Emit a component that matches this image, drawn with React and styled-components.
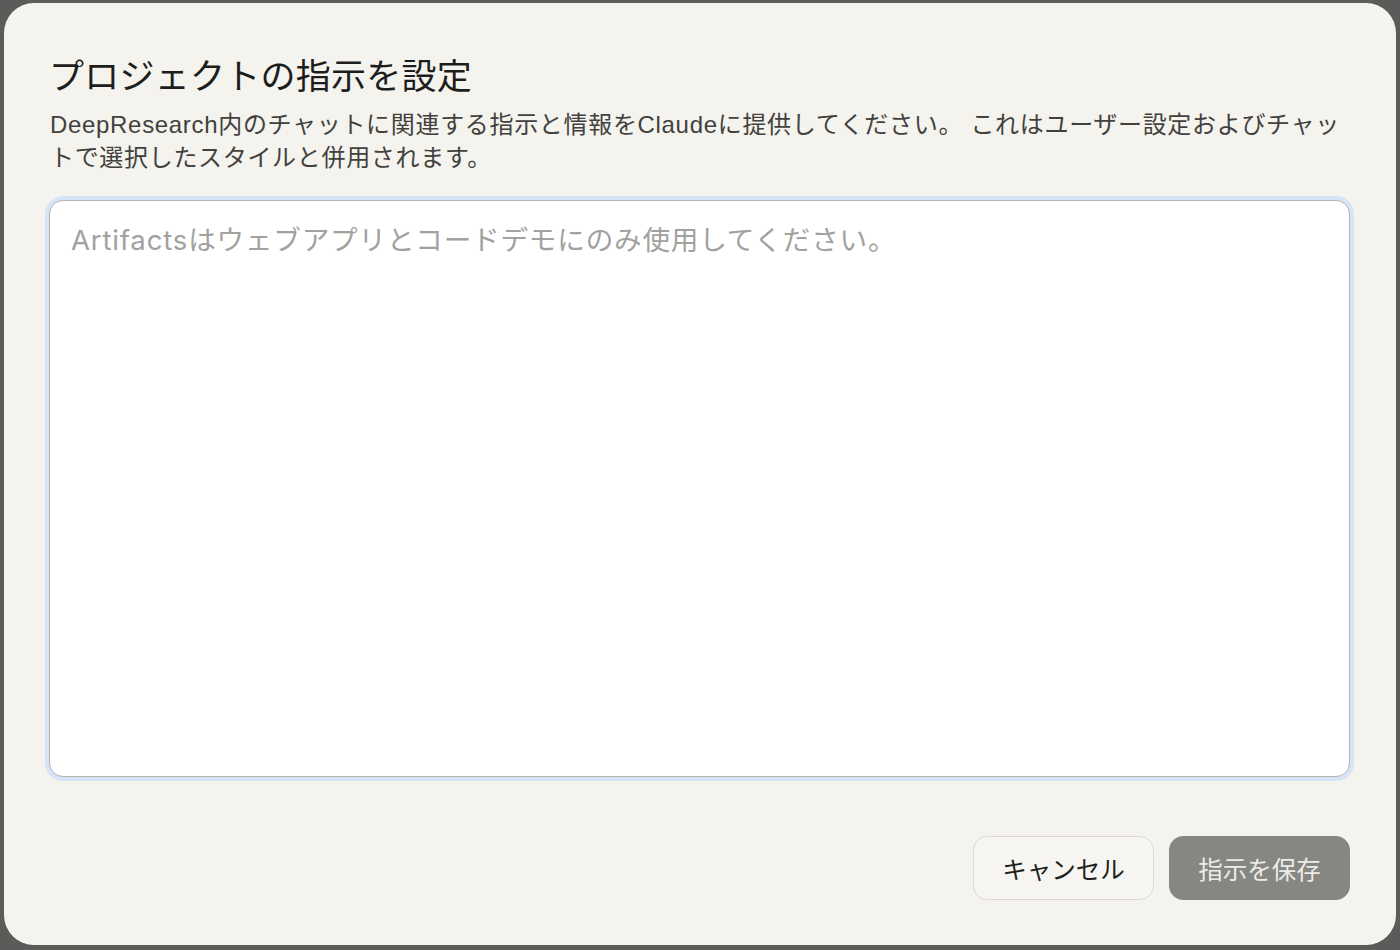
import React from "react";
import styled, { createGlobalStyle } from "styled-components";

const Global = createGlobalStyle`
  html, body { margin: 0; padding: 0; }
  body {
    background: #5b5b59;
    font-family: "Liberation Sans", "Noto Sans CJK JP", sans-serif;
  }
  * { box-sizing: border-box; }
`;

const Backdrop = styled.div`
  width: 1400px;
  height: 950px;
  padding: 3px 4px 5px 4px;
  display: flex;
`;

const Dialog = styled.div`
  width: 1392px;
  height: 942px;
  background: #f4f3ee;
  border-radius: 30px;
  padding: 48px 46px 45px 45px;
  display: flex;
  flex-direction: column;
`;

const Title = styled.h2`
  margin: 0;
  font-family: "Noto Sans CJK JP", sans-serif;
  font-weight: 400;
  font-size: 35px;
  line-height: 45px;
  letter-spacing: 0.25px;
  color: #1d1d1b;
  padding-left: 0;
`;

const Description = styled.p`
  margin: 12px 0 0 0;
  font-size: 24px;
  line-height: 33px;
  letter-spacing: 0.68px;
  color: #42413d;
  padding-left: 1px;
`;

const Field = styled.textarea`
  margin-top: 26px;
  height: 577px;
  width: 100%;
  resize: none;
  background: #ffffff;
  border: 1.5px solid #b4b4b1;
  border-radius: 14px;
  box-shadow: 0 0 0 4px #d5e4f7;
  outline: none;
  padding: 19px 21px;
  font-family: "Inter", "Noto Sans CJK JP", sans-serif;
  font-size: 27.6px;
  line-height: 40px;
  letter-spacing: 0.8px;
  color: #1d1d1b;
  &::placeholder {
    color: #a2a19d;
  }
`;

const Actions = styled.div`
  margin-top: 59px;
  display: flex;
  justify-content: flex-end;
  gap: 15px;
`;

const Button = styled.button`
  width: 181px;
  height: 64px;
  border-radius: 14px;
  font-family: "Noto Sans CJK JP", sans-serif;
  font-size: 24.5px;
  cursor: pointer;
  border: 1px solid ${(p) => (p.$primary ? "#868682" : "#dcdad3")};
  background: ${(p) => (p.$primary ? "#868682" : "#f6f5f1")};
  color: ${(p) => (p.$primary ? "#ecebe6" : "#1f1f1d")};
`;

export default function App() {
  return (
    <>
      <Global />
      <Backdrop>
        <Dialog role="dialog">
          <Title>プロジェクトの指示を設定</Title>
          <Description>
            DeepResearch内のチャットに関連する指示と情報をClaudeに提供してください。
            これはユーザー設定およびチャットで選択したスタイルと併用されます。
          </Description>
          <Field placeholder="Artifactsはウェブアプリとコードデモにのみ使用してください。" />
          <Actions>
            <Button>キャンセル</Button>
            <Button $primary disabled>指示を保存</Button>
          </Actions>
        </Dialog>
      </Backdrop>
    </>
  );
}
